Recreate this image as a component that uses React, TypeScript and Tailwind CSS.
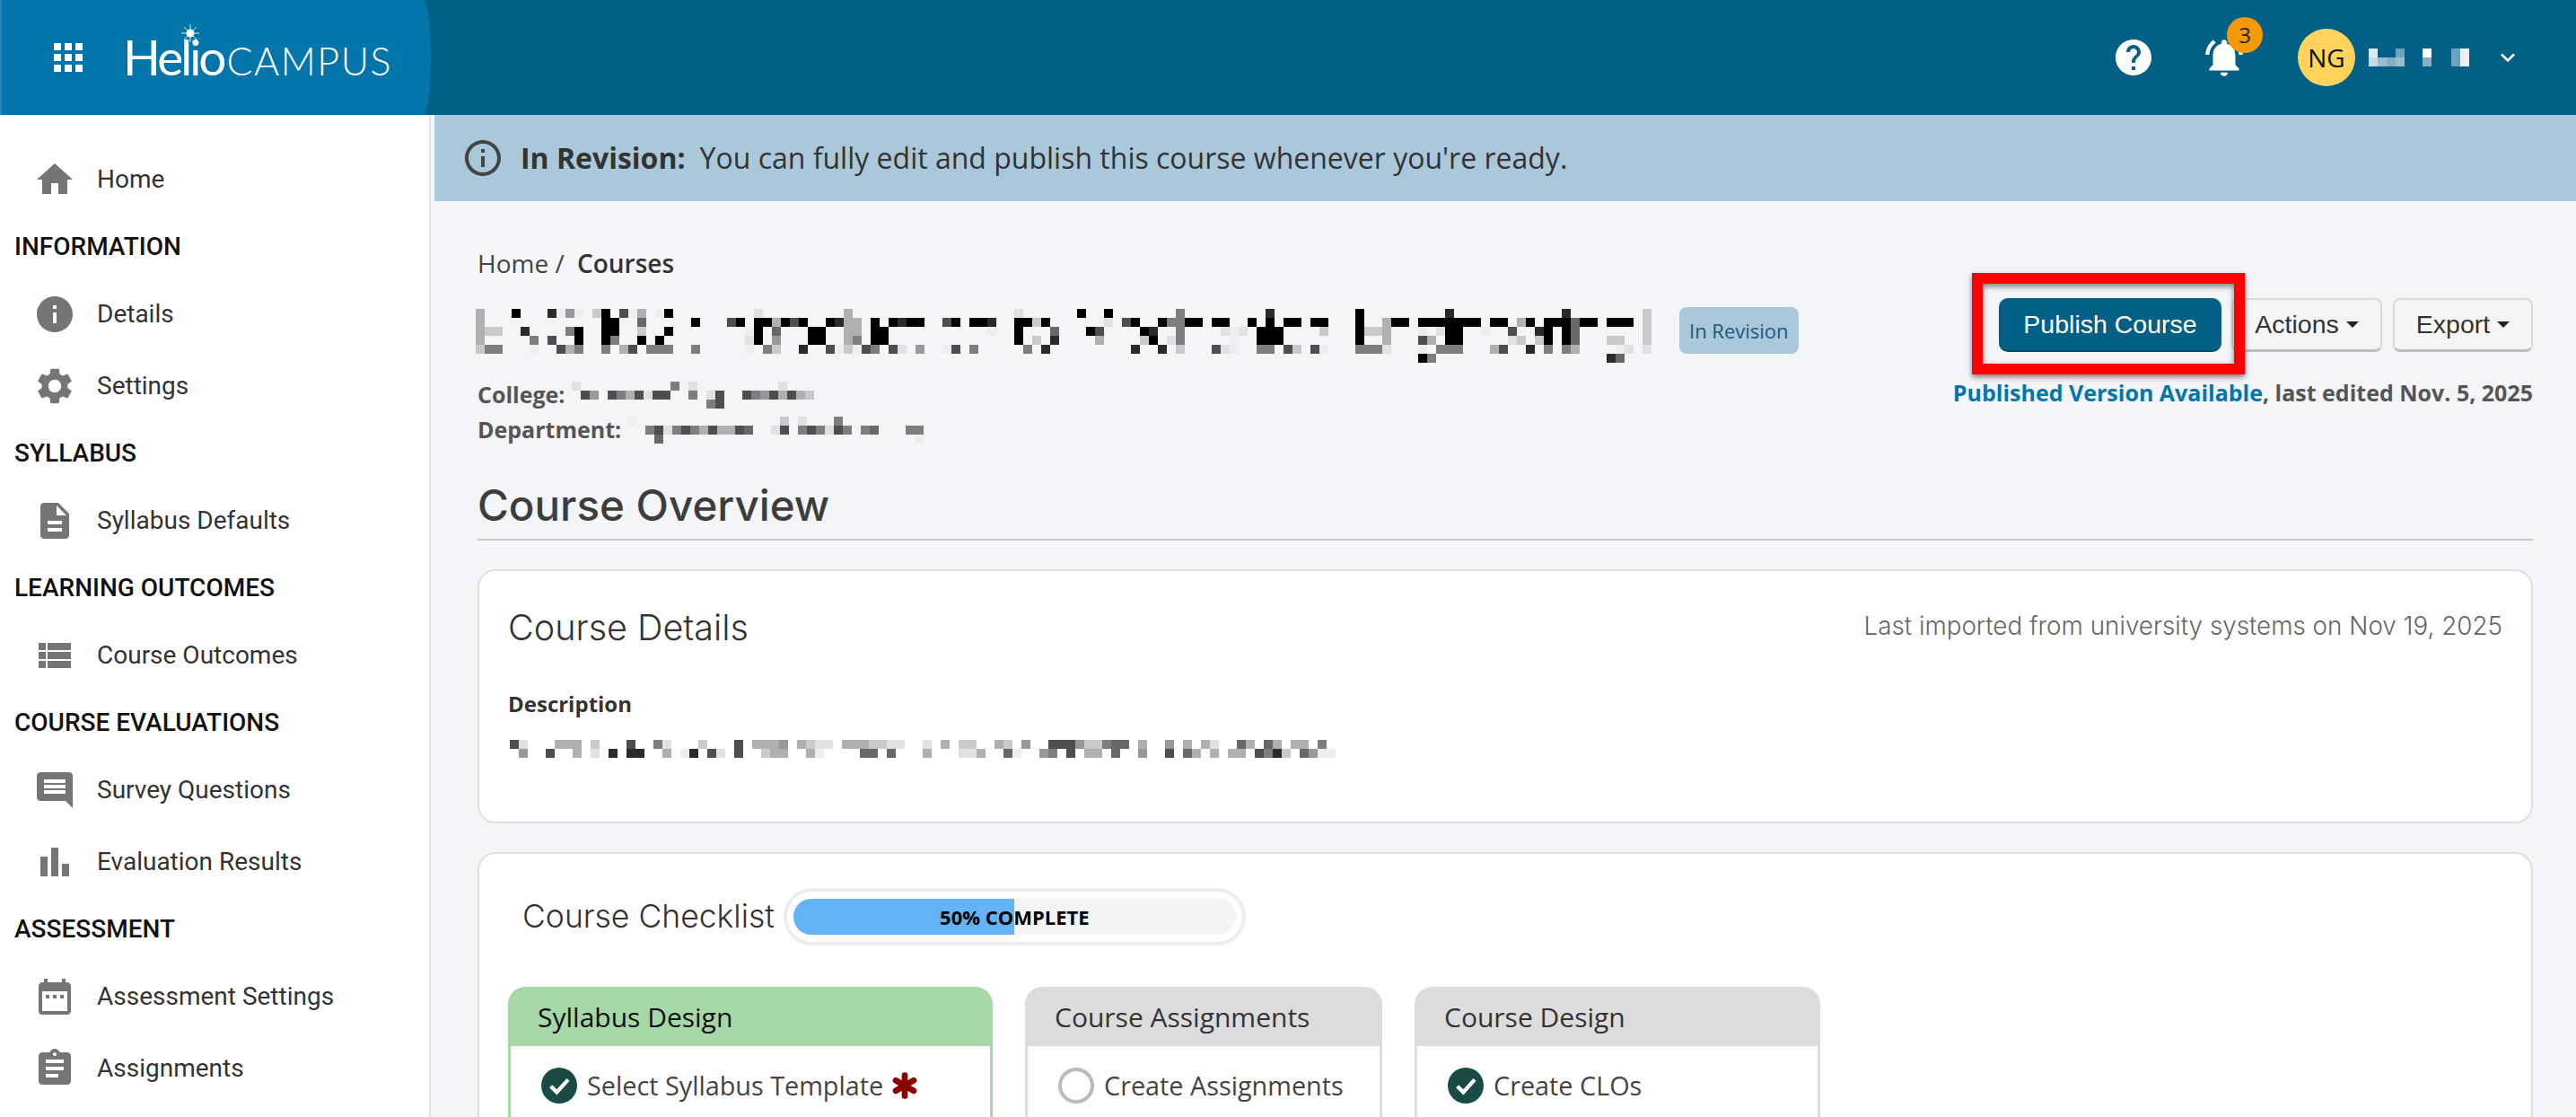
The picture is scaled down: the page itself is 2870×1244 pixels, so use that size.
import { Asterisk } from "lucide-react";
import type { ReactNode } from "react";
import {
  MdAssignment,
  MdBarChart,
  MdDateRange,
  MdDescription,
  MdExpandMore,
  MdHelp,
  MdHome,
  MdInfo,
  MdInfoOutline,
  MdInsertComment,
  MdNotificationsActive,
  MdSettings,
  MdViewList,
} from "react-icons/md";

// grey levels of the pixelated (redacted) strings
const GREYS: Record<string, string> = {
  "0": "#000000",
  "1": "#282a2c",
  "2": "#4c4e50",
  "3": "#66686a",
  "4": "#7c7e80",
  "5": "#96989a",
  "6": "#aeb0b2",
  "7": "#c8cacc",
  "8": "#dfe1e4",
  "9": "#eceef1",
};

const TITLE = [
  "6...0...1959.70.296.90.........8.........6.." + "................8......0..0.......4........." + "1.........0.........1............1........7",
  "6.............00..3.....0...20.006020..0166." + "0.0100..20.001..0070......8.20..04400.00..0." + "0.00.00...0..600.0000000.00.60.000300.000.7",
  "677..1....40..00..7..0........90.3...00..66." + "00...........9..0...3...02....01..4....898.0" + "00....7...0776...9.800..9..2..10.03.......7",
  "6.....4.2..0..04..0.0.........80.5...00..64." + "00..............0.7.1....6....70.84.....9..0" + "00........0..6...26.00.....87.70.03...77..7",
  "744...9..264..4.62.444..4.....9.47..1..29792" + "4.28.5..92.4.....4.1.........1..1.7...289..4" + "4.27.29...4448...9.444...62..1.4.46....98.8",
  "............................................" + "............................................" + ".................04...................13",
];

const COLLEGE = ["8..........4.8.........8", ".25.2462822..4.82..24526267", "...............42"];

const DEPARTMENT = [
  "9................7.8...4",
  "..428424626623..82.424824.43...44",
  "...3............................9",
];

const DESCRIPTION = [
  "28...666.7" + "...2..48.." + ".7...2.666" + "5.6788.666" + "7788..8.6." + "77..67.5.." + "222577433." + "6..5.6.68." + ".36.36.66.4",
  ".5..2..6.8" + ".1.11..6.9" + "1.28.2..76" + "6..69....3" + "3.3...6..." + "886..39..5" + "4.2.66.3.." + "5..2.36.6." + "66.2417.3599",
];

function Mosaic({ rows, className }: { rows: string[]; className?: string }) {
  const cols = Math.max(...rows.map((r) => r.length));
  return (
    <svg
      width={cols * 10}
      height={rows.length * 10}
      shapeRendering="crispEdges"
      className={className}
      aria-hidden
    >
      {rows.map((row, y) =>
        row.split("").map((c, x) =>
          c === "." ? null : <rect key={`${x}-${y}`} x={x * 10} y={y * 10} width={10} height={10} fill={GREYS[c]} />,
        ),
      )}
    </svg>
  );
}

function NavItem({ icon, label }: { icon: ReactNode; label: string }) {
  return (
    <div className="flex h-[80px] items-center">
      <span className="flex w-[108px] justify-center pl-[37px] pr-[23px] text-[#757575]">{icon}</span>
      <span className="text-[28px] text-[#333]">{label}</span>
    </div>
  );
}

function NavHeading({ children }: { children: string }) {
  return <div className="flex h-[70px] items-center pl-[16px] text-[28px] font-medium text-[#111]">{children}</div>;
}

function Sidebar() {
  const icon = "size-[48px] shrink-0";
  return (
    <aside className="h-full w-[480px] shrink-0 border-r-2 border-[#e0e3e6] bg-white pt-[32px] font-['Roboto',sans-serif]">
      <NavItem icon={<MdHome className={icon} />} label="Home" />
      <NavHeading>INFORMATION</NavHeading>
      <NavItem icon={<MdInfo className={icon} />} label="Details" />
      <NavItem icon={<MdSettings className={icon} />} label="Settings" />
      <NavHeading>SYLLABUS</NavHeading>
      <NavItem icon={<MdDescription className={icon} />} label="Syllabus Defaults" />
      <NavHeading>LEARNING OUTCOMES</NavHeading>
      <NavItem icon={<MdViewList className={icon} />} label="Course Outcomes" />
      <NavHeading>COURSE EVALUATIONS</NavHeading>
      <NavItem icon={<MdInsertComment className={icon} />} label="Survey Questions" />
      <NavItem icon={<MdBarChart className={icon} />} label="Evaluation Results" />
      <NavHeading>ASSESSMENT</NavHeading>
      <NavItem icon={<MdDateRange className={icon} />} label="Assessment Settings" />
      <NavItem icon={<MdAssignment className={icon} />} label="Assignments" />
    </aside>
  );
}

function Logo() {
  return (
    <div className="relative flex items-baseline pt-[2px] font-['Lato',sans-serif] text-white">
      <span className="text-[55px] leading-[60px] font-normal tracking-[-3px]">Helio</span>
      <span className="ml-[3px] text-[43px] leading-[60px] font-light tracking-[1.5px]">CAMPUS</span>
      <svg viewBox="0 0 20 20" className="absolute left-[65px] top-[-4px] size-[20px]" stroke="#cfe8f6" strokeWidth="1">
        <path d="M10 0v20M0 10h20M3 3l14 14M17 3L3 17" />
        <circle cx="10" cy="10" r="4.5" fill="#fff" stroke="none" />
      </svg>
    </div>
  );
}

function Header() {
  return (
    <header className="flex h-[128px] shrink-0 items-center justify-between bg-[#025f85]">
      <div className="flex h-full w-[480px] items-center gap-[45px] rounded-[0_9px_9px_0/0_50%_50%_0] border-l-2 border-[#2a86b3] bg-[#0275aa] pl-[58px]">
        <div className="grid grid-cols-3 gap-[4px]">
          {Array.from({ length: 9 }).map((_, i) => (
            <span key={i} className="size-[8px] bg-white" />
          ))}
        </div>
        <Logo />
      </div>
      <div className="flex items-center pr-[60px] text-white">
        <MdHelp className="size-[48px]" />
        <div className="relative ml-[52px]">
          <MdNotificationsActive className="size-[50px]" />
          <span className="absolute -right-[18px] -top-[20px] flex size-[40px] items-center justify-center rounded-full bg-[#f49a06] font-['Open_Sans',sans-serif] text-[24px] text-[#222]">
            3
          </span>
        </div>
        <span className="ml-[57px] flex size-[64px] items-center justify-center rounded-full bg-[#ffd35c] font-['Open_Sans',sans-serif] text-[28px] text-[#111]">
          NG
        </span>
        <svg width="90" height="20" shapeRendering="crispEdges" className="ml-[15px]" aria-hidden>
          <rect x="0" y="0" width="10" height="10" fill="#dde8ef" />
          <rect x="30" y="0" width="10" height="10" fill="#6fa3bc" />
          <rect x="60" y="0" width="10" height="10" fill="#fff" />
          <rect x="0" y="10" width="10" height="10" fill="#c9dae5" />
          <rect x="10" y="10" width="10" height="10" fill="#9dbccd" />
          <rect x="20" y="10" width="10" height="10" fill="#88aec3" />
          <rect x="30" y="10" width="10" height="10" fill="#9dbccd" />
          <rect x="60" y="10" width="10" height="10" fill="#88aec3" />
        </svg>
        <svg width="20" height="20" className="ml-[2px]" aria-hidden>
          <rect x="0" y="0" width="10" height="20" fill="#6fa3bc" />
          <rect x="10" y="0" width="10" height="20" fill="#eaf1f5" />
        </svg>
        <MdExpandMore className="ml-[27px] size-[32px]" />
      </div>
    </header>
  );
}

function DropButton({ label, width }: { label: string; width: string }) {
  return (
    <button
      type="button"
      className={`flex h-[60px] items-center justify-center gap-[8px] rounded-[8px] border-2 border-b-[3px] border-[#dadada] border-b-[#bdbdbd] bg-[#f5f5f5] font-['Liberation_Sans',sans-serif] text-[28.5px] text-[#333] ${width}`}
    >
      {label}
      <span className="h-0 w-0 border-x-[7px] border-t-[7px] border-x-transparent border-t-[#222]" />
    </button>
  );
}

function CheckCircle() {
  return (
    <span className="flex size-[40px] shrink-0 items-center justify-center rounded-full bg-[#1a4a45]">
      <svg viewBox="0 0 24 24" className="size-[32px]" fill="none" stroke="#fff" strokeWidth="3.2">
        <path d="M5 12.5l5 5L19.5 7" />
      </svg>
    </span>
  );
}

function Column({
  title,
  green,
  className,
  children,
}: {
  title: string;
  green?: boolean;
  className: string;
  children: ReactNode;
}) {
  return (
    <div className={`h-[200px] rounded-t-[20px] border-x-[3px] ${green ? "border-[#a5d7a7]" : "border-[#dcdcdc]"} ${className}`}>
      <div
        className={`-mx-[3px] flex h-[66px] items-center rounded-t-[20px] pl-[33px] text-[30px] ${
          green ? "bg-[#a5d7a7] text-[#111]" : "bg-[#dcdcdc] text-[#333]"
        }`}
      >
        {title}
      </div>
      <div className="flex h-[88px] items-center gap-[11px] pl-[34px] text-[28.8px] text-[#444]">{children}</div>
    </div>
  );
}

export default function App() {
  return (
    <div className="flex h-screen w-full flex-col overflow-hidden bg-[#f3f5f9] font-['Open_Sans',sans-serif]">
      <Header />
      <div className="flex min-h-0 flex-1">
        <Sidebar />
        <main className="min-w-0 flex-1 pl-[4px]">
          <div className="flex h-[96px] items-center bg-[#aac8dc] pl-[30px] text-[32px] text-[#333]">
            <MdInfoOutline className="mr-[18px] size-[48px] text-[#444]" />
            <b className="mr-[16px] font-bold">In Revision:</b>
            <span>You can fully edit and publish this course whenever you're ready.</span>
          </div>

          <div className="pl-[48px] pr-[48px]">
            <div className="mt-[50px] h-[38px] text-[28px] leading-[38px] text-[#444]">
              Home / <span className="ml-[7px] font-semibold text-[#333]">Courses</span>
            </div>

            <div className="mt-[8px] flex justify-between">
              <div>
                <div className="flex h-[100px] items-start gap-[31px]">
                  <Mosaic rows={TITLE} className="-ml-[2px] mt-[24px]" />
                  <span className="mt-[22px] flex h-[52px] items-center rounded-[8px] bg-[#aac8dc] px-[11px] text-[22px] text-[#1a5a7a]">
                    In Revision
                  </span>
                </div>
                <div className="flex h-[39px] items-center text-[25px] font-bold text-[#555]">
                  College:
                  <Mosaic rows={COLLEGE} className="ml-[8px]" />
                </div>
                <div className="flex h-[39px] items-center text-[25px] font-bold text-[#555]">
                  Department:
                  <Mosaic rows={DEPARTMENT} className="ml-[7px]" />
                </div>
              </div>
              <div className="flex flex-col items-end pt-[12px]">
                <div className="relative flex items-center">
                  <div className="relative">
                    <button
                      type="button"
                      className="flex h-[60px] w-[248px] items-center justify-center rounded-[10px] border-b-2 border-[#024a68] bg-[#025f85] font-['Liberation_Sans',sans-serif] text-[28.5px] text-white"
                    >
                      Publish Course
                    </button>
                    <span className="absolute -bottom-[25px] -left-[30px] -right-[26px] -top-[28px] z-10 border-[12px] border-[#ff0000] shadow-[0_3px_6px_rgba(0,0,0,0.5),inset_0_3px_6px_rgba(0,0,0,0.5)]" />
                  </div>
                  <div className="ml-[11px]">
                    <DropButton label="Actions" width="w-[168px]" />
                  </div>
                  <div className="ml-[12px]">
                    <DropButton label="Export" width="w-[156px]" />
                  </div>
                </div>
                <div className="mt-[26px] flex h-[39px] items-center text-[25px] font-bold text-[#555]">
                  <span className="text-[#0275aa]">Published Version Available</span>, last edited Nov. 5, 2025
                </div>
              </div>
            </div>

            <h2 className="mt-[38px] border-b-2 border-[#c9c9c9] pb-[10px] font-['Inter',sans-serif] text-[47.5px] leading-[54px] font-medium text-[#3d3d3d]">
              Course Overview
            </h2>

            <section className="mt-[32px] h-[283px] rounded-[20px] border-2 border-[#dcdfe3] bg-white px-[32px] font-['Inter',sans-serif]">
              <div className="flex h-[96px] items-end justify-between pb-[3px]">
                <span className="text-[39.5px] font-light text-[#333]">Course Details</span>
                <span className="pb-[10px] text-[27.8px] font-light text-[#666]">
                  Last imported from university systems on Nov 19, 2025
                </span>
              </div>
              <div className="mt-[34px] font-['Open_Sans',sans-serif] text-[24px] font-bold text-[#333]">Description</div>
              <Mosaic rows={DESCRIPTION} className="ml-[2px] mt-[22px]" />
            </section>

            <section className="mt-[32px] h-[400px] rounded-[20px] border-2 border-[#dcdfe3] bg-white px-[32px]">
              <div className="flex h-[148px] items-center pl-[16px] pb-[8px]">
                <span className="font-['Inter',sans-serif] text-[35.5px] font-light text-[#333]">Course Checklist</span>
                <div className="ml-[10px] flex h-[64px] w-[515px] items-center rounded-full border-4 border-[#eceeee] bg-white px-[7px]">
                  <div className="relative h-[40px] w-full overflow-hidden rounded-full bg-[#f4f4f4]">
                    <div className="h-full w-1/2 bg-[#63b3f6]" />
                    <span className="absolute inset-0 flex items-center justify-center text-[22px] font-bold text-black">
                      50% COMPLETE
                    </span>
                  </div>
                </div>
              </div>
              <div className="flex gap-[36px]">
                <Column title="Syllabus Design" green className="w-[540px]">
                  <CheckCircle />
                  <span>Select Syllabus Template</span>
                  <Asterisk className="-ml-[10px] size-[46px] text-[#8b0000]" strokeWidth={3.5} />
                </Column>
                <Column title="Course Assignments" className="w-[398px]">
                  <span className="size-[40px] shrink-0 rounded-full border-4 border-[#bbb]" />
                  <span>Create Assignments</span>
                </Column>
                <Column title="Course Design" className="w-[452px]">
                  <CheckCircle />
                  <span>Create CLOs</span>
                </Column>
              </div>
            </section>
          </div>
        </main>
      </div>
    </div>
  );
}
